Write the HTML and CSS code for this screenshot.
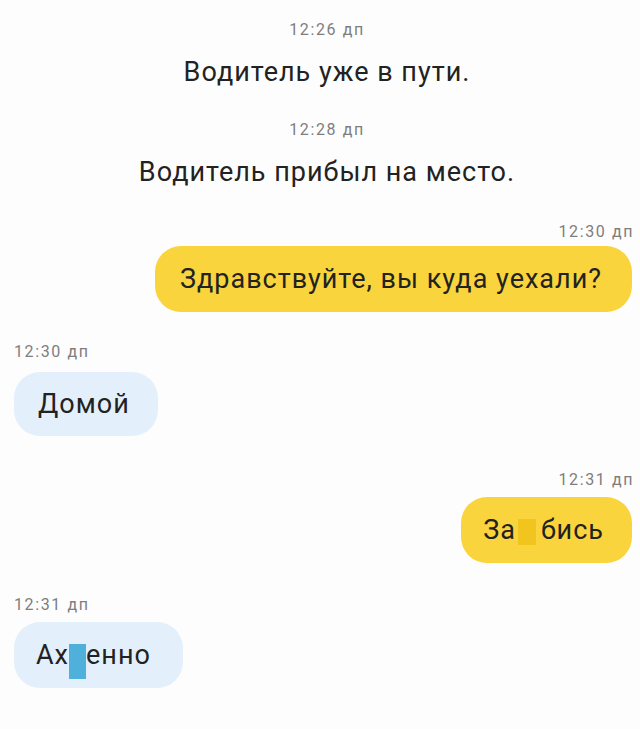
FILE: index.html
```html
<!DOCTYPE html>
<html lang="ru">
<head>
<meta charset="utf-8">
<link rel="stylesheet" href="styles.css">
</head>
<body>
<div class="chat">
  <div class="time center">12:26 дп</div>
  <div class="system s1">Водитель уже в пути.</div>
  <div class="time center t2">12:28 дп</div>
  <div class="system s2">Водитель прибыл на место.</div>

  <div class="time right t3">12:30 дп</div>
  <div class="row out"><div class="bubble yellow b1">Здравствуйте, вы куда уехали?</div></div>

  <div class="time left t4">12:30 дп</div>
  <div class="row in"><div class="bubble blue b2">Домой</div></div>

  <div class="time right t5">12:31 дп</div>
  <div class="row out"><div class="bubble yellow b3">За<span class="cens cens-y"></span>бись</div></div>

  <div class="time left t6">12:31 дп</div>
  <div class="row in"><div class="bubble blue b4">Ах<span class="cens cens-b"></span>енно</div></div>
</div>
</body>
</html>
```

FILE: styles.css
```css
* { box-sizing: border-box; }
html, body {
  margin: 0;
  padding: 0;
  background: #fdfdfd;
}
body {
  width: 640px;
  height: 729px;
  overflow: hidden;
  font-family: Roboto, "Noto Sans", sans-serif;
  color: #222222;
}
.chat {
  display: flex;
  flex-direction: column;
  padding: 21px 8px 0 14px;
}
.time {
  font-size: 16px;
  line-height: 18px;
  color: #7e7e7e;
  letter-spacing: 1.6px;
}
.center { text-align: center; margin-right: -8px; }
.right { text-align: right; margin-right: -2px; }
.left { text-align: left; }
.t2 { margin-top: 34px; }
.t3 { margin-top: 36px; }
.t4 { margin-top: 31px; }
.t5 { margin-top: 35px; }
.t6 { margin-top: 33px; }
.system {
  text-align: center;
  font-size: 27px;
  line-height: 30px;
  letter-spacing: 1px;
  margin-top: 18px;
  margin-right: -8px;
  color: #222222;
}
.row { display: flex; }
.row.out { justify-content: flex-end; }
.row.in { justify-content: flex-start; }
.bubble {
  font-size: 27px;
  line-height: 30px;
  letter-spacing: 1px;
  border-radius: 26px;
  display: flex;
  align-items: center;
  color: #222222;
}
.yellow { background: #f9d43c; }
.blue { background: #e3f0fb; }
.b1 { margin-top: 5px; height: 66px; padding: 0 30px 0 25px; }
.b2 { margin-top: 11px; height: 64px; padding: 0 28px 0 24px; }
.b3 { margin-top: 8px; height: 66px; padding: 0 28px 0 22px; }
.b4 { margin-top: 8px; height: 66px; padding: 0 32px 0 22px; }
.cens {
  display: inline-block;
  flex: none;
}
.cens-y {
  width: 18px;
  height: 26px;
  background: #f2c41e;
  margin: 4px 5px 0 2px;
}
.cens-b {
  width: 17px;
  height: 35px;
  background: #4fb0dc;
  margin: 12px 0 0 0;
}
```
